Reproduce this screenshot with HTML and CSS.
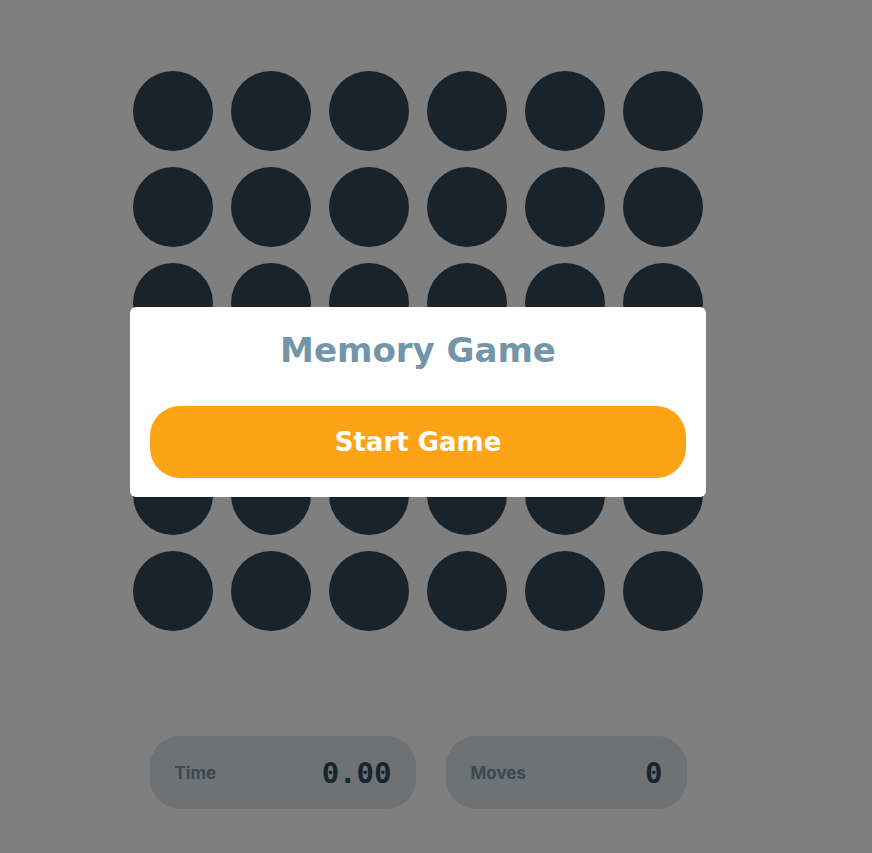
FILE: index.html
```html
<!DOCTYPE html>
<html lang="en">
<head>
<meta charset="utf-8">
<title>Memory Game</title>
<link rel="stylesheet" href="styles.css">
</head>
<body>
<main class="game">
  <div class="board">
    <div class="card"></div><div class="card"></div><div class="card"></div><div class="card"></div><div class="card"></div><div class="card"></div>
    <div class="card"></div><div class="card"></div><div class="card"></div><div class="card"></div><div class="card"></div><div class="card"></div>
    <div class="card"></div><div class="card"></div><div class="card"></div><div class="card"></div><div class="card"></div><div class="card"></div>
    <div class="card"></div><div class="card"></div><div class="card"></div><div class="card"></div><div class="card"></div><div class="card"></div>
    <div class="card"></div><div class="card"></div><div class="card"></div><div class="card"></div><div class="card"></div><div class="card"></div>
    <div class="card"></div><div class="card"></div><div class="card"></div><div class="card"></div><div class="card"></div><div class="card"></div>
  </div>
  <div class="stats">
    <div class="stat stat-time"><span class="stat-label">Time</span><span class="stat-value">0.00</span></div>
    <div class="stat stat-moves"><span class="stat-label">Moves</span><span class="stat-value">0</span></div>
  </div>
  <div class="overlay"></div>
  <div class="modal">
    <h1 class="modal-title">Memory Game</h1>
    <button class="start-btn">Start Game</button>
  </div>
</main>
</body>
</html>
```
FILE: styles.css
```css
html, body {
  margin: 0;
  padding: 0;
  background: #ffffff;
  font-family: Inter, "Noto Sans", sans-serif;
}

.game {
  position: relative;
  width: 576px;
  margin-left: 130px;
  padding-top: 71px;
  display: flex;
  flex-direction: column;
  align-items: center;
}

.board {
  display: grid;
  grid-template-columns: repeat(6, 80px);
  grid-auto-rows: 80px;
  column-gap: 18px;
  row-gap: 16px;
}

.card {
  border-radius: 50%;
  background: #304658;
}

.stats {
  margin-top: 105px;
  display: flex;
  gap: 30px;
}

.stat {
  box-sizing: border-box;
  height: 73px;
  padding: 0 24px 0 25px;
  border-radius: 30px;
  background: #dce4ea;
  display: flex;
  align-items: center;
  justify-content: space-between;
}

.stat-time { width: 266px; }
.stat-moves { width: 241px; }

.stat-label {
  font-size: 17px;
  font-weight: 700;
  color: #7290a4;
}

.stat-value {
  font-family: "DejaVu Sans Mono", "Liberation Mono", monospace;
  font-size: 29px;
  font-weight: 700;
  color: #30485c;
}

.overlay {
  position: fixed;
  inset: 0;
  background: rgba(0, 0, 0, 0.5);
}

.modal {
  position: absolute;
  left: 0;
  top: 307px;
  width: 576px;
  box-sizing: border-box;
  padding: 23px 20px 19px;
  background: #ffffff;
  border-radius: 6px;
  display: flex;
  flex-direction: column;
  align-items: stretch;
}

.modal-title {
  margin: 0 0 35px;
  font-family: "DejaVu Sans", Inter, sans-serif;
  font-size: 34px;
  line-height: 41px;
  font-weight: 700;
  text-align: center;
  color: #7395aa;
}

.start-btn {
  height: 72px;
  border: none;
  border-radius: 30px;
  background: #fca316;
  color: #ffffff;
  font-family: "DejaVu Sans", Inter, sans-serif;
  font-size: 26px;
  font-weight: 700;
  cursor: pointer;
}
```
